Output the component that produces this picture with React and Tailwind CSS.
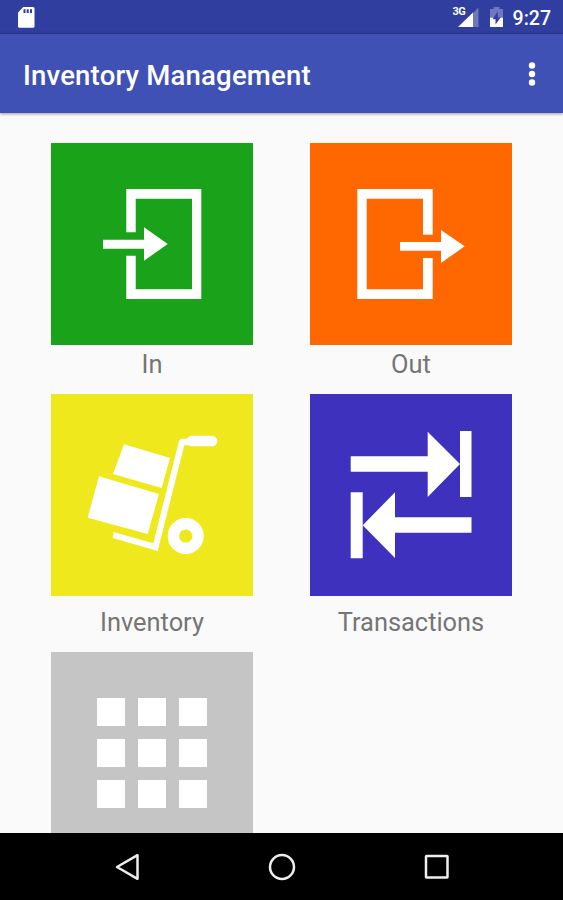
function InIcon() {
  return (
    <>
      <path d="M75.3 89.3V46h75v110h-75v-43.3h9.4v33.6H141V55.7H84.7v33.6z" />
      <path d="M52 96.7h41V84.3l23.7 16.7L93 117.7v-12H52z" />
    </>
  )
}

function OutIcon() {
  return (
    <>
      <path d="M122.7 91.7V46H47.3v110h75.4v-41H113v31.3H56.7V55.7H113v36z" />
      <path d="M90 99h41V87l23.7 16.3L131 120v-12.3H90z" />
    </>
  )
}

function InventoryIcon() {
  return (
    <>
      <path d="M73 50.3L119 64l-8.3 30L62 80z" />
      <path d="M48 82.3L108 100l-11.3 40-60-16.3z" />
      <path d="M62.7 138l39.6 11.2L128 47l1.7-2.300h7.6v6.600H133.300L106.700 157l-45-13z" />
      <rect x="135.500" y="41.700" width="30.800" height="10.600" rx="5.300" />
      <circle cx="134.700" cy="142" r="12.300" fill="none" stroke="white" strokeWidth="11.400" />
    </>
  )
}

function TransactionsIcon() {
  return (
    <>
      <path d="M40.7 62.3h77V37.7L150 70l-32.3 33V77.7h-77z" />
      <path d="M150 37h11.5v66H150zM40.7 98.3h12v66h-12z" />
      <path d="M161.5 123.3H85v-25l-32.3 33L85 164v-25.3h76.5z" />
    </>
  )
}

function GridIcon() {
  const steps = [46, 87, 128]
  return steps.map(y => steps.map(x => <rect key={`${x}-${y}`} x={x} y={y} width="28" height="28" />))
}

const tiles = [
  { label: 'In', color: 'bg-[#1aa31a]', icon: InIcon, height: 'h-[251px]', gap: 'mt-[5px]' },
  { label: 'Out', color: 'bg-[#ff6700]', icon: OutIcon, height: 'h-[251px]', gap: 'mt-[5px]' },
  { label: 'Inventory', color: 'bg-[#eee81c]', icon: InventoryIcon, height: 'h-[258px]', gap: 'mt-3' },
  { label: 'Transactions', color: 'bg-[#3d31be]', icon: TransactionsIcon, height: 'h-[258px]', gap: 'mt-3' },
  { label: '', color: 'bg-[#c5c5c5]', icon: GridIcon, height: 'h-[258px]', gap: 'mt-3' },
]

function Tile({ label, color, icon: Icon, height, gap }) {
  return (
    <button className={`flex flex-col items-center ${height}`}>
      <span className={`block h-[202px] w-[202px] shrink-0 ${color}`}>
        <svg viewBox="0 0 202 202" className="h-full w-full" fill="white">
          <Icon />
        </svg>
      </span>
      {label && <span className={`text-[25.4px] leading-7 text-[#757575] ${gap}`}>{label}</span>}
    </button>
  )
}

function StatusBar() {
  return (
    <div className="flex h-[34px] shrink-0 items-center bg-linear-to-b from-[#303f9f] from-90% to-[#2b388e] pl-[18px] pr-3 text-white">
      <svg width="17" height="21" viewBox="0 0 17 21" className="mt-px">
        <path d="M5.3 0H15q1.5 0 1.5 1.5v17.7q0 1.5-1.5 1.5H1.5q-1.5 0-1.5-1.5V5.5z" fill="white" />
        <path d="M5.5 2.3h2V6h-2zM8.7 2.3h2V6h-2zM12 2.3h2V6h-2z" fill="#303f9f" />
      </svg>
      <div className="ml-auto flex items-center">
        <div className="relative h-[22px] w-[26px]">
          <svg width="26" height="22" viewBox="0 0 26 22">
            <path d="M25.5 1.5V21H6z" fill="white" fillOpacity=".3" />
            <path d="M20 6.5V21H5z" fill="white" />
          </svg>
          <span className="absolute left-0 top-0 text-[11px] font-bold leading-[11px] tracking-tighter">3G</span>
        </div>
        <svg width="15" height="21" viewBox="0 0 15 21" className="ml-2.5">
          <path d="M4.5 0h6v2H14v8H1V2h3.5z" fill="white" fillOpacity=".3" />
          <path d="M1 10.500h13V20H1z" fill="white" />
          <path d="M8.8 4.5v5.7h3L6.5 17.5v-5.300h-3z" fill="#303f9f" />
        </svg>
        <span className="ml-[9px] mt-1 text-[19.5px] font-medium leading-6">9:27</span>
      </div>
    </div>
  )
}

function AppBar() {
  return (
    <header className="z-10 flex h-[79px] shrink-0 items-center justify-between bg-[#3f51b5] pl-[23px] pr-[27px] shadow-[0_1px_3px_rgba(0,0,0,0.4)]">
      <h1 className="mt-1 text-[27.5px] font-medium leading-8 tracking-[0.2px] text-white">Inventory Management</h1>
      <svg width="8" height="24" viewBox="0 0 8 24" fill="white">
        <circle cx="4" cy="3.5" r="3.2" />
        <circle cx="4" cy="12" r="3.2" />
        <circle cx="4" cy="20.5" r="3.2" />
      </svg>
    </header>
  )
}

function NavBar() {
  return (
    <nav className="flex h-[67px] shrink-0 items-center justify-between bg-black pl-[114px] pr-[113px]">
      <svg width="26" height="28" viewBox="0 0 26 28" fill="none" stroke="#eee" strokeWidth="2.5" strokeLinejoin="round">
        <path d="M23.5 2.2v23.6L3 14z" />
      </svg>
      <svg width="28" height="28" viewBox="0 0 28 28" fill="none" stroke="#eee" strokeWidth="2.5">
        <circle cx="14" cy="14" r="12" />
      </svg>
      <svg width="26" height="26" viewBox="0 0 26 26" fill="none" stroke="#eee" strokeWidth="2.5">
        <rect x="2" y="2" width="21.5" height="21.5" rx=".5" />
      </svg>
    </nav>
  )
}

export default function App() {
  return (
    <div className="flex h-[900px] w-[563px] flex-col overflow-hidden bg-[#fafafa] font-[Roboto,sans-serif]">
      <StatusBar />
      <AppBar />
      <main className="min-h-0 flex-1 overflow-hidden pl-[51px] pt-[30px]">
        <div className="grid grid-cols-[202px_202px] gap-x-[57px]">
          {tiles.map(tile => <Tile key={tile.color} {...tile} />)}
        </div>
      </main>
      <NavBar />
    </div>
  )
}
